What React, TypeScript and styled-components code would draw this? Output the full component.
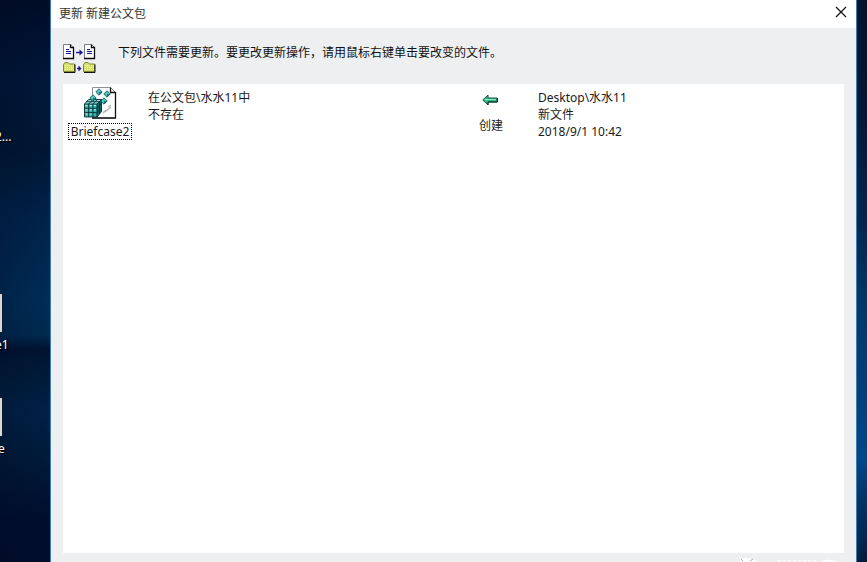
import React from "react";
import styled, { createGlobalStyle } from "styled-components";

const GlobalStyle = createGlobalStyle`
  *, *::before, *::after { box-sizing: border-box; }
  body {
    margin: 0;
    background: #00112d;
    color: #1a1a1a;
    font: 12px/17px "Noto Sans", "Noto Sans CJK SC", sans-serif;
  }
`;

const Desktop = styled.main`
  display: flex;
  height: 100vh;
  overflow: hidden;
`;

const LeftStrip = styled.section`
  flex: 0 0 50px;
  display: flex;
  flex-direction: column;
  align-items: flex-start;
  overflow: hidden;
  color: #fff;
  padding-top: 128px;
  background:
    linear-gradient(90deg, rgba(0, 10, 30, 0.25), transparent),
    linear-gradient(180deg, #000c26 0, #00173a 80px, #001733 150px, #00234b 220px,
      #002c57 300px, #002a50 335px, #001230 350px, #001835 362px, #002146 410px,
      #001a3a 460px, #000e2d 520px, #000d2b 562px);
`;

const RightStrip = styled.div`
  flex: 0 0 10px;
  background: linear-gradient(180deg, #00142f 0, #001836 110px, #00264f 220px,
    #003767 300px, #00488a 460px, #003466 500px, #002a58 535px, #001d3c 562px);
`;

const Shortcut = styled.div<{ $gap?: number }>`
  display: flex;
  flex-direction: column;
  align-items: flex-start;
  margin-top: ${(p) => p.$gap ?? 0}px;
`;

const Thumb = styled.span`
  width: 3px;
  height: 40px;
  margin-bottom: 3px;
  border: 1px solid #101c2c;
  border-left: 0;
  background: #d5d9dd;
`;

const ShortcutLabel = styled.span<{ $shift: number }>`
  margin-left: -${(p) => p.$shift}px;
  text-shadow: 1px 1px 1px #000;
`;

const Dialog = styled.section`
  flex: 1;
  min-width: 0;
  display: flex;
  flex-direction: column;
  border: solid #3c7fae;
  border-width: 0 1px;
  background: #eeeff1;
`;

const TitleBar = styled.header`
  display: flex;
  align-items: center;
  justify-content: space-between;
  height: 28px;
  padding: 0 8px;
  background: #fff;
`;

const Title = styled.h1`
  margin: 0;
  padding-bottom: 2px;
  font: inherit;
  color: #333;
`;

const CloseButton = styled.button`
  display: grid;
  place-items: center;
  width: 14px;
  height: 20px;
  margin-bottom: 4px;
  padding: 0;
  border: 0;
  background: none;
`;

const Intro = styled.div`
  display: flex;
  align-items: flex-start;
  gap: 22px;
  height: 56px;
  padding: 16px 12px 0;
`;

const IntroText = styled.p`
  margin: 0;
  color: #111;
`;

const FileList = styled.ul`
  flex: 1;
  margin: 0 12px;
  padding: 2px 0;
  list-style: none;
  background: #fff;
`;

const FileRow = styled.li`
  display: grid;
  grid-template-columns: 85px minmax(0, 320fr) 70px minmax(0, 306fr);
  align-items: start;
`;

const FileCell = styled.div`
  display: flex;
  flex-direction: column;
  align-items: center;
  gap: 4px;
  padding-right: 11px;
`;

const FileButton = styled.button`
  height: 17px;
  padding: 0 2px;
  border: 1px dotted #000;
  background: none;
  color: inherit;
  font: inherit;
  line-height: 14px;
`;

const DetailCell = styled.div`
  display: flex;
  flex-direction: column;
  padding-top: 3px;
`;

const ActionCell = styled.div`
  display: flex;
  flex-direction: column;
  align-items: center;
  gap: 11px;
  padding: 8px 24px 0 0;
`;

const Footer = styled.footer`
  display: flex;
  justify-content: flex-end;
  align-items: flex-end;
  height: 9px;
  padding-right: 16px;
`;

const CloseIcon = () => (
  <svg width="12" height="12" viewBox="0 0 12 12" aria-hidden="true">
    <path d="M1 1 11 11M11 1 1 11" stroke="#111" strokeWidth="1.2" fill="none" />
  </svg>
);

const Page = ({ x }: { x: number }) => (
  <g transform={`translate(${x} 0)`}>
    <path d="M.5.5h7l3 3v11h-10z" fill="#fff" stroke="#777f85" />
    <path d="M7.5.5v3h3v11H0" fill="none" stroke="#0a0a0a" strokeWidth="1.3" />
    <path d="M3 5.500h3M3 7.500h5M3 9.500h5" stroke="#14148c" strokeWidth="1.2" />
  </g>
);

const Folder = ({ x }: { x: number }) => (
  <g transform={`translate(${x} 18)`}>
    <path d="M.5 9.500v-7l1.500-2h3l1.500 1.500h5v7.500z" fill="#d3e070" stroke="#7f8432" />
    <path d="M2 3.500h9M2 5.500h9M2 7.500h9" stroke="#f4f8b4" strokeDasharray="1 1" />
    <path d="M1 10.500h11v-8" fill="none" stroke="#111" />
  </g>
);

const SyncIcon = () => (
  <svg width="33" height="30" viewBox="0 0 33 30" aria-hidden="true">
    <Page x={0} />
    <Page x={21} />
    <path d="M13 8.500h5" stroke="#14148c" strokeWidth="1.4" />
    <path d="m16.500 5.500 3.500 3-3.500 3z" fill="#14148c" />
    <Folder x={0} />
    <Folder x={20} />
    <path d="M14 24.500h3" stroke="#14148c" strokeWidth="1.4" />
    <path d="m15.500 21.500 3 3-3 3z" fill="#14148c" />
  </svg>
);

const Gem = ({ x, y }: { x: number; y: number }) => (
  <g transform={`translate(${x} ${y})`}>
    <path d="m0-3.200 3.200 3.200L0 3.200-3.200 0z" fill="#52c4bf" />
    <path d="M0 0h3.200L0 3.200z" fill="#0d7a7c" />
    <path d="m0-3.200 3.200 3.200L0 3.200-3.200 0z" fill="none" stroke="#0c4a4c" strokeWidth=".8" />
  </g>
);

const RegistryIcon = () => (
  <svg width="34" height="33" viewBox="0 0 34 33" aria-hidden="true">
    <path d="M9.500 1.500h18l5 5v25.500h-23z" fill="#fdfdfd" stroke="#8d9296" />
    <path d="M27.500 1.500v5h5v25.500H9" fill="none" stroke="#111" strokeWidth="1.3" />
    <path d="m20 27 3-3M22 26l6-5M25 21l3-2" stroke="#b4b7ba" strokeWidth="1.4" />
    <path d="m1.500 18 4-4.500h13L14 18z" fill="#8fe5de" />
    <path d="m14 18 4.500-4.500v12L14 31z" fill="#08666d" />
    <path d="M1.500 18H14v13H1.500z" fill="#3bb0ae" />
    <path
      d="M1.500 18H14v13H1.500zM1.500 18l4-4.500h13L14 18M18.500 13.500v12L14 31M5.700 18v13M9.900 18v13M1.500 22.300H14l4.500-4.600M1.500 26.600H14l4.500-4.700M5.700 18l4-4.500M9.900 18l4.400-4.500M3.500 15.700h13v12"
      fill="none"
      stroke="#062c30"
      strokeWidth=".9"
    />
    <path d="M2.500 19.500h2M6.700 19.500h2M10.900 19.500h2M2.500 23.800h2M6.700 23.800h2M10.900 23.800h2M2.500 28h2M6.700 28h2" stroke="#b4f5ee" />
    <Gem x={16} y={6} />
    <Gem x={24} y={8} />
    <Gem x={10} y={12} />
    <Gem x={21} y={15} />
  </svg>
);

const ArrowIcon = () => (
  <svg width="19" height="12" viewBox="0 0 19 12" aria-hidden="true">
    <path d="M.8 6 6 1v3h9v4H6v3z" fill="#35b88a" stroke="#155743" />
    <path d="M3 5.500h11" stroke="#8be6c0" />
    <path d="M6 11V8h9.500V4" fill="none" stroke="#0b2f26" />
  </svg>
);

const FooterMark = () => (
  <svg width="104" height="5" viewBox="0 0 104 5" aria-hidden="true">
    <path d="M2 5Q9-3 22 5z" fill="#fff" />
    <path d="m5 2 2 2M14 4l3-2" stroke="#a9acb0" />
    <path d="M42 4h40" stroke="#f9f9fa" strokeWidth="2" strokeDasharray="3 2" />
    <path d="M84 5q8-5 17 0z" fill="#fff" />
  </svg>
);

interface SyncFile {
  name: string;
  local: string[];
  action: string;
  source: string[];
}

const files: SyncFile[] = [
  {
    name: "Briefcase2",
    local: ["在公文包\\水水11中", "不存在"],
    action: "创建",
    source: ["Desktop\\水水11", "新文件", "2018/9/1 10:42"],
  },
];

const Details = ({ lines }: { lines: string[] }) => (
  <DetailCell>
    {lines.map((line) => (
      <span key={line}>{line}</span>
    ))}
  </DetailCell>
);

export default function App() {
  return (
    <>
      <GlobalStyle />
      <Desktop>
        <LeftStrip>
          <Shortcut>
            <ShortcutLabel $shift={5}>2...</ShortcutLabel>
          </Shortcut>
          <Shortcut $gap={148}>
            <Thumb />
            <ShortcutLabel $shift={5}>e1</ShortcutLabel>
          </Shortcut>
          <Shortcut $gap={44}>
            <Thumb />
            <ShortcutLabel $shift={2}>e</ShortcutLabel>
          </Shortcut>
        </LeftStrip>
        <Dialog aria-labelledby="dialog-title">
          <TitleBar>
            <Title id="dialog-title">更新 新建公文包</Title>
            <CloseButton type="button" aria-label="关闭">
              <CloseIcon />
            </CloseButton>
          </TitleBar>
          <Intro>
            <SyncIcon />
            <IntroText>下列文件需要更新。要更改更新操作，请用鼠标右键单击要改变的文件。</IntroText>
          </Intro>
          <FileList>
            {files.map((file) => (
              <FileRow key={file.name}>
                <FileCell>
                  <RegistryIcon />
                  <FileButton type="button">{file.name}</FileButton>
                </FileCell>
                <Details lines={file.local} />
                <ActionCell>
                  <ArrowIcon />
                  <span>{file.action}</span>
                </ActionCell>
                <Details lines={file.source} />
              </FileRow>
            ))}
          </FileList>
          <Footer>
            <FooterMark />
          </Footer>
        </Dialog>
        <RightStrip />
      </Desktop>
    </>
  );
}
